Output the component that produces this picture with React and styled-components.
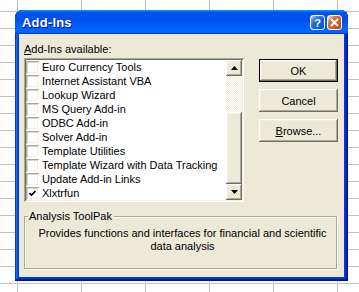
import React from 'react'
import styled, { createGlobalStyle, css } from 'styled-components'

const GlobalStyle = createGlobalStyle`
  html, body {
    margin: 0;
    padding: 0;
  }
  body {
    width: 359px;
    height: 292px;
    overflow: hidden;
    background: #fff;
  }
`

const uiFont = css`
  font-family: "Liberation Sans", Arial, sans-serif;
  font-size: 11px;
  color: #000;
`

// raised 3d edge used by buttons, scroll arrows and the thumb
const raised = css`
  background: #ece9d8;
  box-shadow: inset -1px -1px #716f64, inset 1px 1px #fff,
    inset -2px -2px #aca899, inset 2px 2px #f1efe2;
`

const Sheet = styled.div`
  width: 359px;
  height: 292px;
  box-sizing: border-box;
  padding: 10px 0 0 15px;
  background-color: #fff;
  background-image: linear-gradient(to right, #c0c0c0 1px, transparent 1px),
    linear-gradient(to bottom, #c0c0c0 1px, transparent 1px);
  background-size: 64px 100%, 100% 17px;
  background-position: 17px 0, 0 11px;
`

const Window = styled.div`
  width: 333px;
  height: 271px;
  display: flex;
  flex-direction: column;
  border-radius: 8px 8px 0 0;
  overflow: hidden;
  background: #0831d9;
  box-shadow: inset -1px -1px #00138c, inset 1px 1px #0831d9,
    inset -2px -2px #001ea0, inset 2px 2px #166aee,
    inset -3px -3px #003bda, inset 3px 3px #0855dd;
`

const TitleBar = styled.div`
  height: 24px;
  flex: none;
  display: flex;
  align-items: center;
  padding: 0 6px 0 7px;
  background: linear-gradient(
    180deg,
    #0997ff,
    #0053ee 10%,
    #0050ee 40%,
    #0066ff 86%,
    #0066ff 92%,
    #005bff 95%,
    #003dd7 97%,
    #003dd7
  );
`

const Title = styled.div`
  flex: 1;
  font-family: "Liberation Sans", Arial, sans-serif;
  font-weight: bold;
  font-size: 13px;
  color: #fff;
  text-shadow: 1px 1px #0f1089;
  letter-spacing: 0.2px;
`

const CapButtons = styled.div`
  display: flex;
  gap: 2px;
  margin-top: 1px;
`

const CapButton = styled.div`
  width: 15px;
  height: 15px;
  box-sizing: border-box;
  border: 1px solid #fff;
  border-radius: 3px;
  display: flex;
  align-items: center;
  justify-content: center;
  color: #fff;
  font-family: "Liberation Sans", Arial, sans-serif;
  font-weight: bold;
  font-size: 11px;
  background: ${({ $close }) =>
    $close
      ? 'radial-gradient(circle at 90% 90%, #cc4600 0, #dc6527 55%, #cd7546 70%, #ffccb2 90%, #fff 100%)'
      : 'radial-gradient(circle at 90% 90%, #0054e9 0, #2263d5 55%, #4479e4 70%, #a3bbec 90%, #fff 100%)'};
`

const Frame = styled.div`
  flex: 1;
  display: flex;
  padding: 0 4px 4px;
`

const Client = styled.div`
  flex: 1;
  background: #ece9d8;
  padding: 8px 6px 0 5px;
  ${uiFont}
`

const TopRow = styled.div`
  display: flex;
  gap: 15px;
`

const LeftCol = styled.div`
  width: 220px;
`

const Label = styled.div`
  line-height: 14px;
  height: 14px;
  margin-bottom: 2px;
  white-space: nowrap;

  u {
    text-underline-offset: 1px;
  }
`

const ListBox = styled.div`
  height: 144px;
  box-sizing: border-box;
  padding: 2px;
  display: flex;
  background: #fff;
  box-shadow: inset 1px 1px #aca899, inset -1px -1px #fff,
    inset 2px 2px #716f64, inset -2px -2px #f1efe2;
`

const Items = styled.div`
  flex: 1;
  overflow: hidden;
  display: flex;
  flex-direction: column;
`

const Item = styled.div`
  height: 14px;
  flex: none;
  display: flex;
  align-items: center;
  gap: 3px;
  white-space: nowrap;
  line-height: 14px;
`

const Check = styled.span`
  width: 13px;
  height: 13px;
  box-sizing: border-box;
  flex: none;
  display: flex;
  align-items: center;
  justify-content: center;
  background: #fff;
  box-shadow: inset 1px 1px #aca899, inset -1px -1px #fff,
    inset 2px 2px #d8d5c6, inset -2px -2px #f1efe2;
`

const ScrollBar = styled.div`
  width: 16px;
  display: flex;
  flex-direction: column;
`

const ScrollButton = styled.div`
  height: 16px;
  flex: none;
  display: flex;
  align-items: center;
  justify-content: center;
  ${raised}
`

const Track = styled.div`
  height: ${({ $h }) => $h}px;
  flex: none;
  background-color: #fff;
  background-image: repeating-conic-gradient(#ece9d8 0 25%, #fff 0 50%);
  background-size: 2px 2px;
`

const Thumb = styled.div`
  flex: 1;
  ${raised}
`

const ButtonCol = styled.div`
  width: 79px;
  margin-top: 17px;
  display: flex;
  flex-direction: column;
  gap: 7px;
`

const PushButton = styled.div`
  height: 23px;
  box-sizing: border-box;
  display: flex;
  align-items: center;
  justify-content: center;
  ${raised}
  ${({ $default }) =>
    $default &&
    css`
      box-shadow: inset 0 0 0 1px #000, inset -2px -2px #716f64,
        inset 2px 2px #fff, inset -3px -3px #aca899, inset 3px 3px #f1efe2;
    `}

  u {
    text-underline-offset: 1px;
  }
`

const GroupBox = styled.div`
  position: relative;
  width: 313px;
  height: 53px;
  box-sizing: border-box;
  margin-top: 14px;
  border: 1px solid #aca899;
  box-shadow: 1px 1px #fff, inset 1px 1px #fff;
  padding: 10px 4px 0 8px;
`

const Legend = styled.span`
  position: absolute;
  top: -8px;
  left: 3px;
  padding: 0 2px 0 1px;
  line-height: 14px;
  background: #ece9d8;
`

const Description = styled.p`
  margin: 0;
  text-align: center;
  line-height: 13px;
`

const addIns = [
  { name: 'Euro Currency Tools' },
  { name: 'Internet Assistant VBA' },
  { name: 'Lookup Wizard' },
  { name: 'MS Query Add-in' },
  { name: 'ODBC Add-in' },
  { name: 'Solver Add-in' },
  { name: 'Template Utilities' },
  { name: 'Template Wizard with Data Tracking' },
  { name: 'Update Add-in Links' },
  { name: 'Xlxtrfun', checked: true },
]

const Arrow = ({ down }) => (
  <svg width="7" height="4" viewBox="0 0 7 4">
    <polygon points={down ? '0,0 7,0 3.5,4' : '0,4 7,4 3.5,0'} fill="#000" />
  </svg>
)

const App = () => {
  return (
    <Sheet>
      <GlobalStyle />
      <Window>
        <TitleBar>
          <Title>Add-Ins</Title>
          <CapButtons>
            <CapButton>?</CapButton>
            <CapButton $close>
              <svg width="9" height="9" viewBox="0 0 9 9">
                <path d="M1 1 L8 8 M8 1 L1 8" stroke="#fff" strokeWidth="2" />
              </svg>
            </CapButton>
          </CapButtons>
        </TitleBar>

        <Frame>
          <Client>
            <TopRow>
              <LeftCol>
                <Label>
                  <u>A</u>dd-Ins available:
                </Label>
                <ListBox>
                  <Items>
                    {addIns.map((a) => (
                      <Item key={a.name}>
                        <Check>
                          {a.checked && (
                            <svg width="7" height="7" viewBox="0 0 7 7">
                              <path d="M0.5 3 L2.5 5 L6.5 1" stroke="#000" strokeWidth="1.6" fill="none" />
                            </svg>
                          )}
                        </Check>
                        {a.name}
                      </Item>
                    ))}
                  </Items>
                  <ScrollBar>
                    <ScrollButton>
                      <Arrow />
                    </ScrollButton>
                    <Track $h={36} />
                    <Thumb />
                    <ScrollButton>
                      <Arrow down />
                    </ScrollButton>
                  </ScrollBar>
                </ListBox>
              </LeftCol>

              <ButtonCol>
                <PushButton $default>OK</PushButton>
                <PushButton>Cancel</PushButton>
                <PushButton>
                  <span>
                    <u>B</u>rowse...
                  </span>
                </PushButton>
              </ButtonCol>
            </TopRow>

            <GroupBox>
              <Legend>Analysis ToolPak</Legend>
              <Description>
                Provides functions and interfaces for financial and scientific data analysis
              </Description>
            </GroupBox>
          </Client>
        </Frame>
      </Window>
    </Sheet>
  )
}

export default App
